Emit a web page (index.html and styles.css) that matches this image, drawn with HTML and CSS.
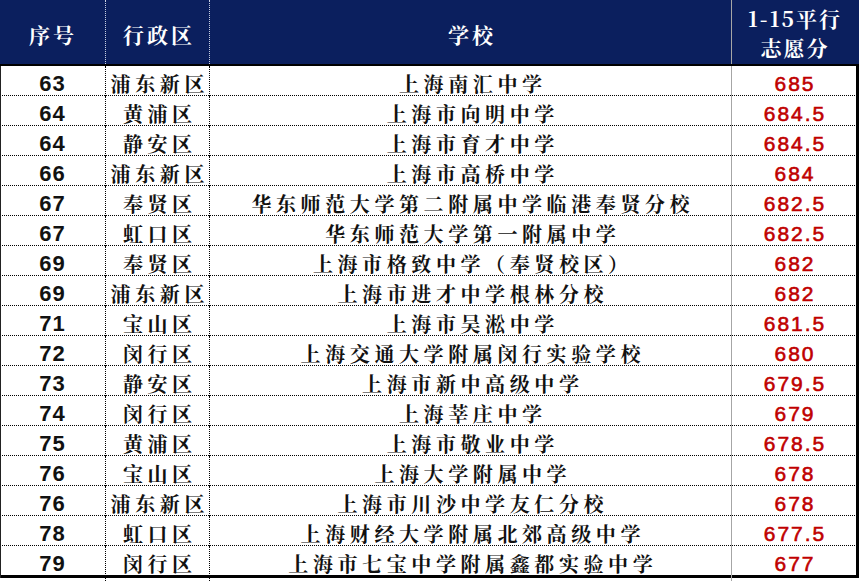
FILE: index.html
```html
<!DOCTYPE html>
<html lang="zh">
<head>
<meta charset="utf-8">
<link rel="stylesheet" href="styles.css">
</head>
<body>
<div class="table">
  <div class="row head">
    <div class="c c1">序号</div>
    <div class="c c2">行政区</div>
    <div class="c c3">学校</div>
    <div class="c c4"><span>1-15平行</span><span>志愿分</span></div>
  </div>
  <div class="row"><div class="c c1">63</div><div class="c c2">浦东新区</div><div class="c c3">上海南汇中学</div><div class="c c4">685</div></div>
  <div class="row"><div class="c c1">64</div><div class="c c2">黄浦区</div><div class="c c3">上海市向明中学</div><div class="c c4">684.5</div></div>
  <div class="row"><div class="c c1">64</div><div class="c c2">静安区</div><div class="c c3">上海市育才中学</div><div class="c c4">684.5</div></div>
  <div class="row"><div class="c c1">66</div><div class="c c2">浦东新区</div><div class="c c3">上海市高桥中学</div><div class="c c4">684</div></div>
  <div class="row"><div class="c c1">67</div><div class="c c2">奉贤区</div><div class="c c3">华东师范大学第二附属中学临港奉贤分校</div><div class="c c4">682.5</div></div>
  <div class="row"><div class="c c1">67</div><div class="c c2">虹口区</div><div class="c c3">华东师范大学第一附属中学</div><div class="c c4">682.5</div></div>
  <div class="row"><div class="c c1">69</div><div class="c c2">奉贤区</div><div class="c c3">上海市格致中学（奉贤校区）</div><div class="c c4">682</div></div>
  <div class="row"><div class="c c1">69</div><div class="c c2">浦东新区</div><div class="c c3">上海市进才中学根林分校</div><div class="c c4">682</div></div>
  <div class="row"><div class="c c1">71</div><div class="c c2">宝山区</div><div class="c c3">上海市吴淞中学</div><div class="c c4">681.5</div></div>
  <div class="row"><div class="c c1">72</div><div class="c c2">闵行区</div><div class="c c3">上海交通大学附属闵行实验学校</div><div class="c c4">680</div></div>
  <div class="row"><div class="c c1">73</div><div class="c c2">静安区</div><div class="c c3">上海市新中高级中学</div><div class="c c4">679.5</div></div>
  <div class="row"><div class="c c1">74</div><div class="c c2">闵行区</div><div class="c c3">上海莘庄中学</div><div class="c c4">679</div></div>
  <div class="row"><div class="c c1">75</div><div class="c c2">黄浦区</div><div class="c c3">上海市敬业中学</div><div class="c c4">678.5</div></div>
  <div class="row"><div class="c c1">76</div><div class="c c2">宝山区</div><div class="c c3">上海大学附属中学</div><div class="c c4">678</div></div>
  <div class="row"><div class="c c1">76</div><div class="c c2">浦东新区</div><div class="c c3">上海市川沙中学友仁分校</div><div class="c c4">678</div></div>
  <div class="row"><div class="c c1">78</div><div class="c c2">虹口区</div><div class="c c3">上海财经大学附属北郊高级中学</div><div class="c c4">677.5</div></div>
  <div class="row last"><div class="c c1">79</div><div class="c c2">闵行区</div><div class="c c3">上海市七宝中学附属鑫都实验中学</div><div class="c c4">677</div></div>
  <div class="row tail"><div class="c c1"></div><div class="c c2"></div><div class="c c3"></div><div class="c c4"></div></div>
</div>
</body>
</html>
```
FILE: styles.css
```css
* { box-sizing: border-box; }
html, body { margin: 0; padding: 0; background: #ffffff; }
body { width: 861px; height: 581px; overflow: hidden; }

.table {
  width: 859px;
  display: flex;
  flex-direction: column;
}

.row {
  display: grid;
  grid-template-columns: 106px 104px 522px 127px;
  height: 30px;
  border-bottom: 1px dotted #000;
}

.c {
  display: flex;
  align-items: center;
  justify-content: center;
  font-family: "Noto Serif CJK SC", "Noto Sans CJK SC", serif;
  font-weight: 700;
  font-size: 20px;
  color: #111;
  letter-spacing: 4.6px;
  padding-left: 4.6px;
  padding-top: 3px;
  white-space: nowrap;
}

.c1 { border-right: 1px dotted #000; border-left: 1px solid #222; }
.c2 { border-right: 1px dotted #000; }
.c3 { border-right: 1px solid #a6a6a6; }
.c4 { border-right: 3px solid #000; }

.c1, .c4 {
  font-family: "Liberation Sans", Arial, sans-serif;
  font-size: 21px;
  letter-spacing: 1px;
  padding-left: 1px;
}
.c1 { padding-right: 2px; font-size: 22px; }
.c4 { color: #c00000; font-weight: 400; -webkit-text-stroke: 0.6px #c00000; letter-spacing: 2px; padding-left: 2px; }

.head {
  height: 66px;
  background: #0b1f5e;
  border-bottom: 2px solid #000;
}
.head .c {
  color: #fff;
  border-left: none;
  padding-top: 4px;
  font-family: "Noto Serif CJK SC", "Noto Sans CJK SC", serif;
  font-size: 21px;
  letter-spacing: 3px;
  padding-left: 3px;
}
.head .c1, .head .c2 { border-right: 1px dotted #c9d0e3; }
.head .c3 { border-right: 1px solid #a6a6a6; }
.head .c4 {
  flex-direction: column;
  line-height: 29px;
  padding-top: 2px;
  -webkit-text-stroke: 0;
  font-weight: 700;
  letter-spacing: 2px;
  padding-left: 2px;
  border-right: 3px solid #0b1f5e;
}

.last { height: 32px; border-bottom: 3px solid #000; }
.tail { height: 3px; border-bottom: none; }
.tail .c { padding: 0; border-left: none; }
.tail .c4 { border-right: none; }
```
